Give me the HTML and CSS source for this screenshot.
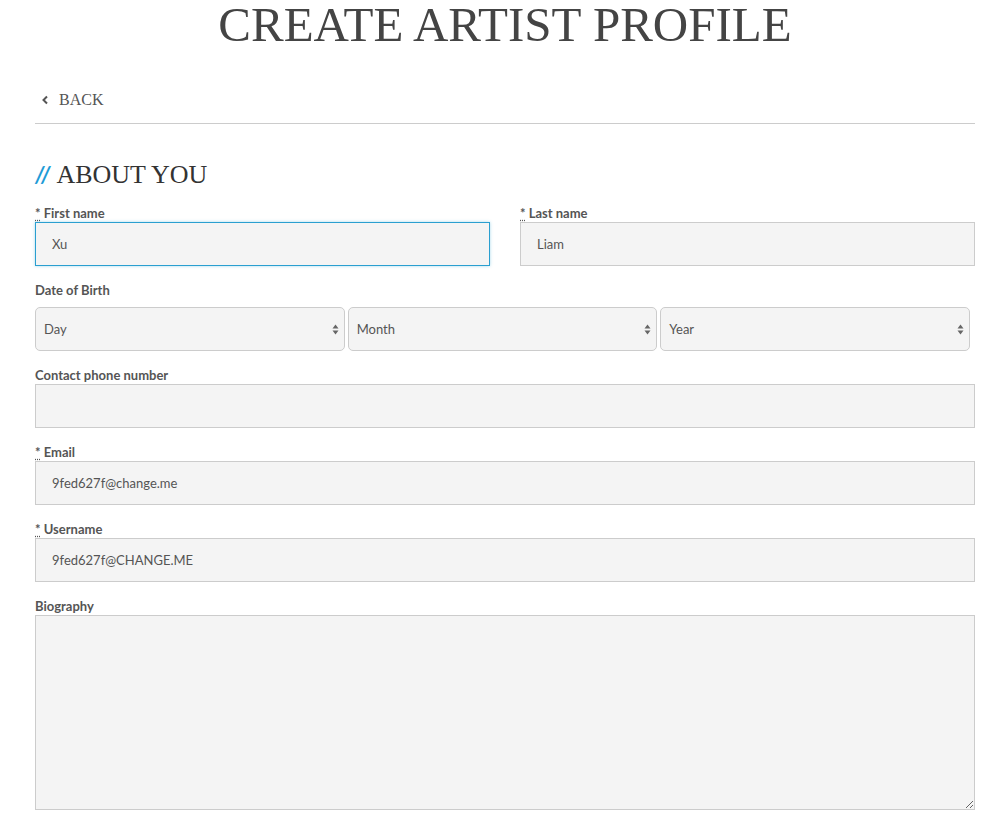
FILE: index.html
```html
<!DOCTYPE html>
<html>
<head>
<meta charset="utf-8">
<link rel="stylesheet" href="styles.css">
</head>
<body>
<div class="page">
  <h1 class="title">CREATE ARTIST PROFILE</h1>
  <div class="backbar">
    <a class="back" href="#"><svg class="chev" width="8" height="10" viewBox="0 0 8 10"><path d="M6 1.5 L2.5 5 L6 8.5" fill="none" stroke="#555" stroke-width="2"/></svg>BACK</a>
  </div>
  <h2 class="section"><span class="slashes">//</span> ABOUT YOU</h2>
  <form class="form">
    <div class="row two">
      <div class="field">
        <label><abbr>*</abbr> First name</label>
        <input class="input focus" type="text" value="Xu">
      </div>
      <div class="field">
        <label><abbr>*</abbr> Last name</label>
        <input class="input" type="text" value="Liam">
      </div>
    </div>
    <div class="field">
      <label>Date of Birth</label>
      <div class="selects">
        <div class="select"><span>Day</span><svg width="7" height="11" viewBox="0 0 7 11"><path d="M0.5 4.5 L3.5 0.5 L6.5 4.5Z M0.5 6.5 L3.5 10.5 L6.5 6.5Z" fill="#666"/></svg></div>
        <div class="select"><span>Month</span><svg width="7" height="11" viewBox="0 0 7 11"><path d="M0.5 4.5 L3.5 0.5 L6.5 4.5Z M0.5 6.5 L3.5 10.5 L6.5 6.5Z" fill="#666"/></svg></div>
        <div class="select"><span>Year</span><svg width="7" height="11" viewBox="0 0 7 11"><path d="M0.5 4.5 L3.5 0.5 L6.5 4.5Z M0.5 6.5 L3.5 10.5 L6.5 6.5Z" fill="#666"/></svg></div>
      </div>
    </div>
    <div class="field">
      <label>Contact phone number</label>
      <input class="input" type="text" value="">
    </div>
    <div class="field">
      <label><abbr>*</abbr> Email</label>
      <input class="input" type="text" value="9fed627f@change.me">
    </div>
    <div class="field">
      <label><abbr>*</abbr> Username</label>
      <input class="input" type="text" value="9fed627f@CHANGE.ME">
    </div>
    <div class="field">
      <label>Biography</label>
      <textarea class="input area"></textarea>
    </div>
  </form>
</div>
</body>
</html>
```
FILE: styles.css
```css
html, body { margin: 0; padding: 0; background: #fff; }
body { font-family: Lato, "Liberation Sans", sans-serif; color: #555; }
.page { width: 940px; margin: 0 0 0 35px; }
.title {
  font-family: "Liberation Serif", serif;
  font-weight: normal;
  font-size: 49px;
  line-height: 50px;
  color: #444;
  text-align: center;
  margin: 0;
  padding-top: 0;
}
.backbar { margin-top: 30px; padding: 9px 0 14px; border-bottom: 1px solid #ccc; }
.back {
  font-family: "Liberation Serif", serif;
  font-size: 16px;
  line-height: 18px;
  color: #555;
  text-decoration: none;
  display: inline-flex;
  align-items: center;
  padding-left: 6px;
}
.chev { margin-right: 10px; }
.section {
  font-family: "Liberation Serif", serif;
  font-weight: normal;
  font-size: 26px;
  color: #333;
  margin: 36px 0 15px;
  line-height: 30px;
}
.slashes { color: #1e9bd7; font-style: italic; font-weight: bold; font-family: Lato, sans-serif; font-size: 22px; letter-spacing: 1px; }
.form { display: flex; flex-direction: column; gap: 16px; }
.row.two { display: grid; grid-template-columns: 455px 455px; column-gap: 30px; }
.field { display: flex; flex-direction: column; }
label { font-weight: bold; font-size: 13px; line-height: 16px; color: #555; margin-bottom: 1px; }
abbr { text-decoration: underline dotted; text-underline-offset: 2px; }
.input {
  box-sizing: border-box;
  height: 44px;
  width: 100%;
  background: #f4f4f4;
  border: 1px solid #ccc;
  border-radius: 0;
  padding: 0 16px;
  font-family: Lato, sans-serif;
  font-size: 13px;
  color: #555;
  outline: none;
  margin: 0;
}
.input.focus { border-color: #2a9fd0; box-shadow: 0 0 3px rgba(42,159,208,0.4); }
.selects { display: flex; gap: 3px; width: 935px; margin-top: 8px; }
.select {
  box-sizing: border-box;
  flex: 1;
  height: 44px;
  background: #f4f4f4;
  border: 1px solid #ccc;
  border-radius: 5px;
  display: flex;
  align-items: center;
  justify-content: space-between;
  padding: 0 5px 0 8px;
  font-size: 13px;
  color: #555;
}
.area { height: 195px; resize: vertical; padding-top: 10px; }
```
